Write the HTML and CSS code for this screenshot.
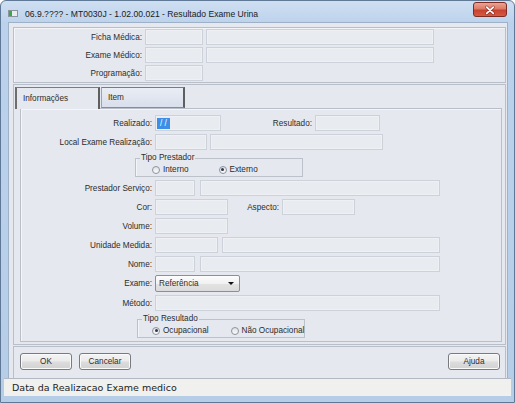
FILE: index.html
```html
<!doctype html>
<html lang="pt-BR">
  <head>
    <meta charset="UTF-8" />
    <meta name="viewport" content="width=device-width, initial-scale=1.0" />
    <title>Resultado Exame Urina</title>
    <link rel="stylesheet" href="styles.css">
  </head>
  <body>
    <div class="Window">
      <div class="Window-title">
        <svg class="Window-icon" width="10" height="7" viewBox="0 0 10 7">
          <rect x="0.5" y="0.5" width="9" height="6" fill="#e9ecef" stroke="#8c949c" />
          <rect x="1" y="1" width="3" height="5" fill="#3aa84a" />
        </svg>
        <span class="Window-caption">06.9.???? - MT0030J - 1.02.00.021 - Resultado Exame Urina</span>
        <span class="Window-close">
          <svg width="34" height="15" viewBox="0 0 34 15">
            <path d="M13.5 4 L20.5 10.5 M20.5 4 L13.5 10.5" stroke="#6a1d16" stroke-width="3.4" stroke-linecap="round" opacity="0.55" />
            <path d="M13.5 4 L20.5 10.5 M20.5 4 L13.5 10.5" stroke="#fff" stroke-width="1.8" stroke-linecap="round" />
          </svg>
        </span>
      </div>

      <div class="Window-client">
        <!-- cabecalho -->
        <div class="Panel Panel--header">
          <div class="Row">
            <span class="Label Label--header">Ficha Médica:</span>
            <span class="Field w58"></span>
            <span class="Field w228"></span>
          </div>
          <div class="Row">
            <span class="Label Label--header">Exame Médico:</span>
            <span class="Field w58"></span>
            <span class="Field w228"></span>
          </div>
          <div class="Row">
            <span class="Label Label--header">Programação:</span>
            <span class="Field w58"></span>
          </div>
        </div>

        <!-- abas -->
        <div class="Tabs">
          <div class="Tabs-bar">
            <div class="Tab Tab--active">Informações</div>
            <div class="Tab">Item</div>
          </div>
          <div class="Tabs-page">
            <div class="Row">
              <span class="Label">Realizado:</span>
              <span class="Field w66"><span class="Selection">/ /</span></span>
              <span class="Label Label--inline w88">Resultado:</span>
              <span class="Field w65"></span>
            </div>
            <div class="Row">
              <span class="Label">Local Exame Realização:</span>
              <span class="Field w52"></span>
              <span class="Field w173"></span>
            </div>

            <fieldset class="Group">
              <legend class="Group-title">Tipo Prestador</legend>
              <div class="Group-options Group-options--prestador">
                <span class="Radio"><span class="Radio-dot"></span>Interno</span>
                <span class="Radio"><span class="Radio-dot Radio-dot--checked"></span>Externo</span>
              </div>
            </fieldset>

            <div class="Row">
              <span class="Label">Prestador Serviço:</span>
              <span class="Field w40"></span>
              <span class="Field Field--apart w240"></span>
            </div>
            <div class="Row">
              <span class="Label">Cor:</span>
              <span class="Field w73"></span>
              <span class="Label Label--inline w48">Aspecto:</span>
              <span class="Field w73"></span>
            </div>
            <div class="Row">
              <span class="Label">Volume:</span>
              <span class="Field w73"></span>
            </div>
            <div class="Row">
              <span class="Label">Unidade Medida:</span>
              <span class="Field w63"></span>
              <span class="Field Field--near w218"></span>
            </div>
            <div class="Row">
              <span class="Label">Nome:</span>
              <span class="Field w40"></span>
              <span class="Field Field--apart w240"></span>
            </div>
            <div class="Row Row--tall">
              <span class="Label">Exame:</span>
              <span class="Select w85">Referência<span class="Select-arrow"></span></span>
            </div>
            <div class="Row">
              <span class="Label">Método:</span>
              <span class="Field w285"></span>
            </div>

            <fieldset class="Group Group--resultado">
              <legend class="Group-title">Tipo Resultado</legend>
              <div class="Group-options Group-options--resultado">
                <span class="Radio"><span class="Radio-dot Radio-dot--checked"></span>Ocupacional</span>
                <span class="Radio"><span class="Radio-dot"></span>Não Ocupacional</span>
              </div>
            </fieldset>
          </div>
        </div>

        <!-- botoes -->
        <div class="Buttons">
          <span class="Button">OK</span>
          <span class="Button">Cancelar</span>
          <span class="Button Button--right">Ajuda</span>
        </div>
      </div>

      <div class="Status">Data da Realizacao Exame medico</div>
    </div>
  </body>
</html>
```

FILE: styles.css
```css
:root {
  --color-frame: #bcd2ea;
  --color-panel: #e5e8ee;
  --color-line: #b9bfc9;
  --color-field: #e8ebf0;
  --color-field-line: #cdd1d9;
  --color-text: #2c2c2c;
}

* {
  box-sizing: border-box;
}

body {
  margin: 0;
  font-family: "Liberation Sans", Arial, sans-serif;
  font-size: 8.2px;
  color: var(--color-text);
  background-color: #fff;
}

/* janela */
.Window {
  width: 515px;
  height: 403px;
  display: flex;
  flex-direction: column;
  padding-bottom: 6px;
  border: 1px solid #5f7896;
  border-radius: 6px 6px 0 0;
  background: linear-gradient(to bottom, #cfdff2 0, #bcd2ec 22px, #b6cde8 100%);
}

.Window-title {
  height: 21px;
  display: flex;
  align-items: flex-start;
  padding: 0 7px;
}

.Window-icon {
  margin-top: 9px;
  flex: none;
}

.Window-caption {
  margin: 8px 0 0 7px;
  line-height: 11px;
  font-size: 8.6px;
  color: #1b1b1b;
}

.Window-close {
  margin: 1px 0 0 auto;
  width: 34px;
  height: 15px;
  display: flex;
  border: 1px solid #7d2c24;
  border-radius: 3px;
  background: linear-gradient(to bottom, #eba393 0, #de7a68 45%, #c9412f 55%, #d45a44 100%);
}

.Window-client {
  flex: 1;
  display: flex;
  flex-direction: column;
  margin: 0 6px 0 7px;
  padding: 4px 1px 0 4px;
  border: 1px solid #9fb1c7;
  border-bottom: 0;
  background-color: var(--color-panel);
}

/* paineis */
.Panel {
  border: 1px solid var(--color-line);
  box-shadow: inset 1px 1px 0 #f4f5f8;
}

.Panel--header {
  display: flex;
  flex-direction: column;
  gap: 2px;
  padding: 1px 0;
}

.Row {
  height: 16px;
  flex: none;
  display: flex;
  align-items: center;
  gap: 3px;
}

.Row--tall {
  height: 17px;
}

.Label {
  width: 131px;
  flex: none;
  text-align: right;
  white-space: nowrap;
}

.Label--header {
  width: 128px;
}

.Label--inline {
  width: auto;
}

.Field {
  height: 16px;
  flex: none;
  display: flex;
  align-items: center;
  padding-left: 1px;
  border: 1px solid var(--color-field-line);
  background-color: var(--color-field);
  box-shadow: inset 0 0 0 1px #eef0f4;
}

.Field--near {
  margin-left: 1px;
}

.Field--apart {
  margin-left: 2px;
}

.Selection {
  padding: 0 3px;
  line-height: 11px;
  color: #fff;
  background-color: #3d8ee6;
}

.w40 { width: 40px; }
.w48 { width: 48px; }
.w52 { width: 52px; }
.w58 { width: 58px; }
.w63 { width: 63px; }
.w65 { width: 65px; }
.w66 { width: 66px; }
.w73 { width: 73px; }
.w85 { width: 85px; }
.w88 { width: 88px; }
.w173 { width: 173px; }
.w218 { width: 218px; }
.w228 { width: 228px; }
.w240 { width: 240px; }
.w285 { width: 285px; }

/* abas */
.Tabs {
  flex: 1;
  display: flex;
  flex-direction: column;
  margin-top: 1px;
  padding: 2px 3px 2px 1px;
  border: 1px solid var(--color-line);
}

.Tabs-bar {
  display: flex;
  gap: 1px;
}

.Tab {
  height: 21px;
  display: flex;
  align-items: center;
  padding-left: 6px;
  border-top: 1px solid #7c7c7c;
  border-left: 1px solid #a3a3a3;
  border-right: 2px solid #5f5f5f;
  border-bottom: 1px solid #8c8c8c;
  background: linear-gradient(to bottom, #e9edf5, #d9dfeb);
}

.Tab:first-child {
  width: 85px;
}

.Tab:last-child {
  width: 84px;
}

.Tab--active {
  position: relative;
  z-index: 1;
  margin-bottom: -1px;
  height: 22px;
  border-left: 2px solid #6e6e6e;
  border-bottom: 0;
  background: var(--color-panel);
}

.Tabs-page {
  flex: 1;
  display: flex;
  flex-direction: column;
  gap: 3px;
  margin-left: 5px;
  padding-top: 6px;
  border: 1px solid var(--color-line);
  box-shadow: inset 1px 1px 0 #f4f5f8;
}

/* grupos de opcoes */
.Group {
  width: 168px;
  margin: 0 0 0 114px;
  padding: 0 0 1px;
  border: 1px solid #bcc1ca;
  box-shadow: inset 1px 0 0 #f4f5f8;
}

.Group--resultado {
  margin-left: 116px;
}

.Group-title {
  margin-left: 4px;
  padding: 0 1px;
  line-height: 10px;
}

.Group-options {
  height: 11px;
  margin-top: 1px;
  display: flex;
  align-items: center;
}

.Group-options--prestador {
  padding-left: 16px;
  gap: 30px;
}

.Group-options--resultado {
  padding-left: 14px;
  gap: 22px;
}

.Radio {
  display: flex;
  align-items: center;
  gap: 3px;
  white-space: nowrap;
}

.Radio-dot {
  width: 8px;
  height: 8px;
  display: flex;
  align-items: center;
  justify-content: center;
  border: 1px solid #8d939c;
  border-radius: 50%;
  background: linear-gradient(to bottom, #dfe2e7, #fbfbfc);
}

.Radio-dot--checked::after {
  content: "";
  width: 3px;
  height: 3px;
  border-radius: 50%;
  background-color: #2d3a4c;
}

.Select {
  height: 17px;
  flex: none;
  display: flex;
  align-items: center;
  padding: 0 5px 0 3px;
  border: 1px solid #8b8f97;
  border-radius: 2px;
  background: linear-gradient(to bottom, #fdfdfd 0, #f1f1f1 50%, #e3e3e3 51%, #dbdbdb 100%);
}

.Select-arrow {
  margin-left: auto;
  width: 0;
  height: 0;
  border-left: 3px solid transparent;
  border-right: 3px solid transparent;
  border-top: 3px solid #111;
}

/* botoes */
.Buttons {
  height: 32px;
  flex: none;
  display: flex;
  align-items: flex-start;
  gap: 7px;
  margin-top: 1px;
  padding: 6px 5px 0 6px;
  border: 1px solid var(--color-line);
  border-bottom: 0;
}

.Button {
  width: 52px;
  height: 17px;
  display: flex;
  align-items: center;
  justify-content: center;
  border: 1px solid #777a7f;
  border-radius: 3px;
  background: linear-gradient(to bottom, #f4f4f4 0, #ebebeb 48%, #dddddd 52%, #d2d2d2 100%);
  box-shadow: inset 0 0 0 1px #fafafa;
}

.Button--right {
  margin-left: auto;
}

.Status {
  height: 18px;
  flex: none;
  display: flex;
  align-items: center;
  margin: 0 3px;
  padding-left: 8px;
  border-top: 1px solid #b3b9c2;
  font-family: "DejaVu Sans", Verdana, sans-serif;
  font-size: 9.5px;
  color: #222;
  background-color: #f0f0ef;
}
```
